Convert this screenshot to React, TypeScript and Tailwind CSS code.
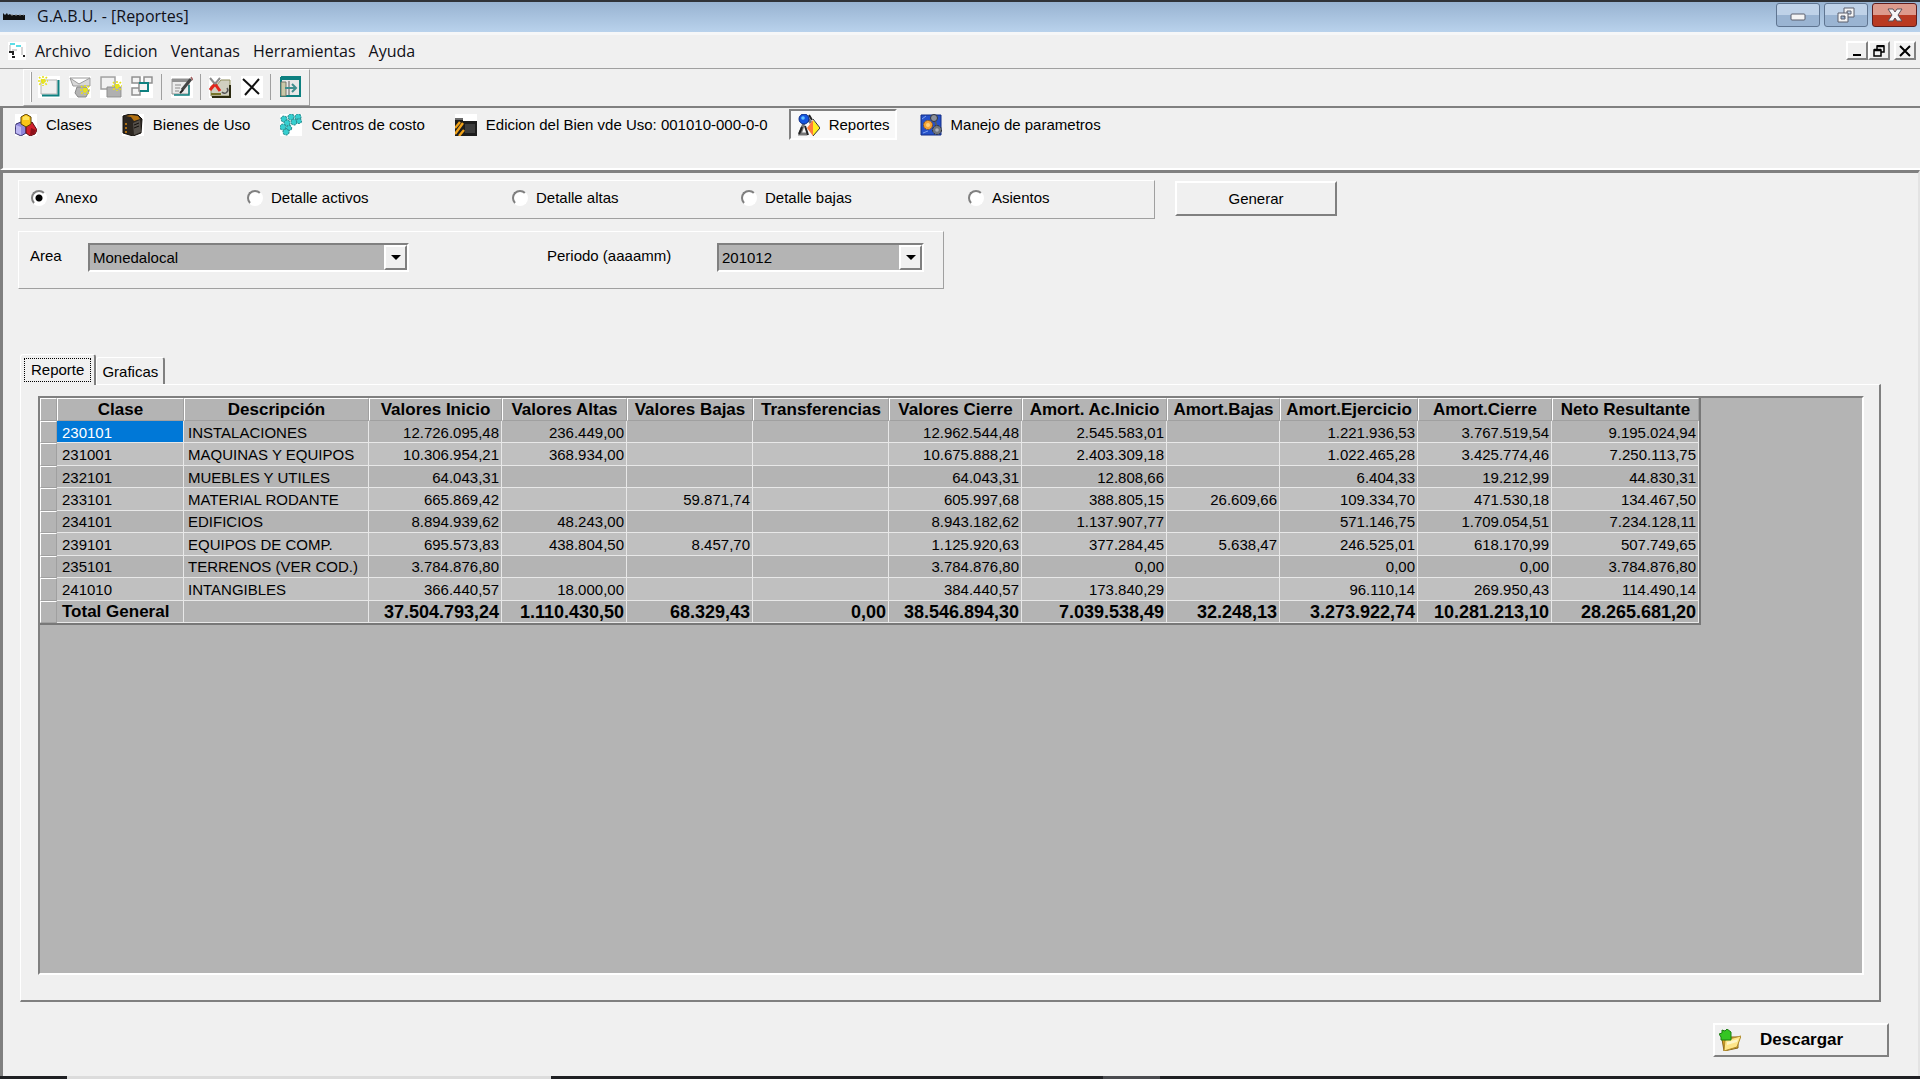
import React, { ReactNode, useState } from 'react';

interface Row {
  clase: string;
  descripcion: string;
  valores: string[];
}

const columns = [
  { title: 'Clase', width: 'w-[127px]' },
  { title: 'Descripción', width: 'w-[185px]' },
  { title: 'Valores Inicio', width: 'w-[133px]' },
  { title: 'Valores Altas', width: 'w-[125px]' },
  { title: 'Valores Bajas', width: 'w-[126px]' },
  { title: 'Transferencias', width: 'w-[136px]' },
  { title: 'Valores Cierre', width: 'w-[133px]' },
  { title: 'Amort. Ac.Inicio', width: 'w-[145px]' },
  { title: 'Amort.Bajas', width: 'w-[113px]' },
  { title: 'Amort.Ejercicio', width: 'w-[138px]' },
  { title: 'Amort.Cierre', width: 'w-[134px]' },
  { title: 'Neto Resultante', width: 'w-[147px]' },
];

const rows: Row[] = [
  { clase: '230101', descripcion: 'INSTALACIONES', valores: ['12.726.095,48', '236.449,00', '', '', '12.962.544,48', '2.545.583,01', '', '1.221.936,53', '3.767.519,54', '9.195.024,94'] },
  { clase: '231001', descripcion: 'MAQUINAS Y EQUIPOS', valores: ['10.306.954,21', '368.934,00', '', '', '10.675.888,21', '2.403.309,18', '', '1.022.465,28', '3.425.774,46', '7.250.113,75'] },
  { clase: '232101', descripcion: 'MUEBLES Y UTILES', valores: ['64.043,31', '', '', '', '64.043,31', '12.808,66', '', '6.404,33', '19.212,99', '44.830,31'] },
  { clase: '233101', descripcion: 'MATERIAL RODANTE', valores: ['665.869,42', '', '59.871,74', '', '605.997,68', '388.805,15', '26.609,66', '109.334,70', '471.530,18', '134.467,50'] },
  { clase: '234101', descripcion: 'EDIFICIOS', valores: ['8.894.939,62', '48.243,00', '', '', '8.943.182,62', '1.137.907,77', '', '571.146,75', '1.709.054,51', '7.234.128,11'] },
  { clase: '239101', descripcion: 'EQUIPOS DE COMP.', valores: ['695.573,83', '438.804,50', '8.457,70', '', '1.125.920,63', '377.284,45', '5.638,47', '246.525,01', '618.170,99', '507.749,65'] },
  { clase: '235101', descripcion: 'TERRENOS (VER COD.)', valores: ['3.784.876,80', '', '', '', '3.784.876,80', '0,00', '', '0,00', '0,00', '3.784.876,80'] },
  { clase: '241010', descripcion: 'INTANGIBLES', valores: ['366.440,57', '18.000,00', '', '', '384.440,57', '173.840,29', '', '96.110,14', '269.950,43', '114.490,14'] },
];

const totales = ['37.504.793,24', '1.110.430,50', '68.329,43', '0,00', '38.546.894,30', '7.039.538,49', '32.248,13', '3.273.922,74', '10.281.213,10', '28.265.681,20'];

const reportTypes = ['Anexo', 'Detalle activos', 'Detalle altas', 'Detalle bajas', 'Asientos'];

const Icon = ({ children, size = 'size-[22px]' }: { children: ReactNode; size?: string }) => (
  <svg viewBox="0 0 22 22" className={`${size} shrink-0`} aria-hidden="true">
    {children}
  </svg>
);

const Spark = ({ x, y }: { x: number; y: number }) => (
  <g stroke="#e6e21e" strokeWidth="1.6" strokeDasharray="2 1">
    <path d={`M${x - 5} ${y}h10M${x} ${y - 5}v10M${x - 4} ${y - 4}l8 8M${x + 4} ${y - 4}l-8 8`} />
  </g>
);

/* Toolbar icons */

const NewIcon = () => (
  <Icon>
    <path fill="#fff" d="M0 0h22v22H0z" />
    <path fill="#f0f0f0" stroke="#b4b4b4" d="M3 4h16v14H3z" />
    <path fill="none" stroke="#0d8080" strokeWidth="2" d="M20.500 4v15.500H4" />
    <Spark x={5} y={5} />
  </Icon>
);

const OpenIcon = () => (
  <Icon>
    <path fill="#fff" d="M0 0h22v22H0z" />
    <path fill="#d8d8d8" stroke="#9a9a9a" d="M1 2h20v8H4zM1 2l9 6 11-6" />
    <path fill="#b4b4b4" stroke="#8a8a8a" d="M8 11h9l3 4-3 6H9l-3-4z" />
    <Spark x={16} y={14} />
  </Icon>
);

const CopyIcon = () => (
  <Icon>
    <path fill="#fff" d="M0 0h22v22H0z" />
    <path fill="#f2f2f2" stroke="#a0a0a0" strokeWidth="1.500" d="M1 1h14v12H1z" />
    <path fill="#b0b0b0" stroke="#909090" d="M7 11h14v10H7z" />
    <Spark x={17} y={10} />
  </Icon>
);

const CascadeIcon = () => (
  <Icon>
    <path fill="#fff" d="M0 0h22v22H0z" />
    <path fill="#f4f4f4" stroke="#8f8f8f" strokeWidth="1.500" d="M1 1h8v6H1zM13 1h8v6h-8zM1 12h8v7H1z" />
    <path fill="#f4f4f4" stroke="#8f8f8f" strokeWidth="1.500" d="M8 7h9v8H8z" />
    <path fill="none" stroke="#0d8080" strokeWidth="2" d="M8 7h9v8H9" />
  </Icon>
);

const EditIcon = () => (
  <Icon>
    <path fill="#fff" d="M0 0h22v22H0z" />
    <path fill="#ececec" stroke="#909090" d="M1 3h17v15H1z" />
    <path fill="#909090" d="M1 3h17v3H1z" />
    <path stroke="#aaa" strokeWidth="1.500" d="M4 9h6M4 12h5M4 15h4" />
    <path fill="none" stroke="#0d8080" strokeWidth="1.500" d="M18 9v10H3" />
    <path stroke="#444" strokeWidth="3" d="M11 14l9-11" />
    <path stroke="#a06060" strokeWidth="1.500" d="M20 1l2 3" />
    <path stroke="#222" strokeWidth="2" d="M9 17l3-3" />
  </Icon>
);

const DeleteIcon = () => (
  <Icon>
    <path fill="#fff" d="M0 0h22v22H0z" />
    <path fill="#d0cfc0" stroke="#8f8d5c" d="M2 10h5l5-6h9v16H2z" />
    <path fill="none" stroke="#77752a" strokeWidth="2" d="M2 18h10" />
    <path fill="none" stroke="#2b2a10" strokeWidth="2" d="M3 21h18V9" />
    <path fill="none" stroke="#555" strokeWidth="1.500" d="M18 12a3 3 0 0 1-5 4" />
    <path fill="none" stroke="#e3241c" strokeWidth="3" d="M1 14l5-6 5 7" />
    <path stroke="#8a8a8a" strokeWidth="2" d="M1 2l5 6M11 2L6 8" />
  </Icon>
);

const CrossIcon = () => (
  <Icon>
    <path fill="#fff" d="M0 0h22v22H0z" />
    <path fill="none" stroke="#111" strokeWidth="2" d="M2 3l16 15M18 3L4 19" />
  </Icon>
);

const ExitIcon = () => (
  <Icon>
    <path fill="#e8e8e8" stroke="#0d8080" strokeWidth="2" d="M1 2h19v18H1z" />
    <path fill="#0d8080" d="M1 0h20v4H1z" />
    <path fill="#c9c9a8" stroke="#77776a" d="M1 6h5v14H1z" />
    <path stroke="#888" strokeWidth="1.500" d="M9 5v14" />
    <path fill="none" stroke="#3f8f8f" strokeWidth="2" d="M5 12h11M12 8l4 4-4 4" />
  </Icon>
);

/* Window list icons */

const ClasesIcon = () => (
  <Icon>
    <path fill="#fff" d="M0 0h22v22H0z" />
    <path fill="#8f86dc" stroke="#3b3570" d="M1 10l5-2 5 4v7l-5 3-6-3z" />
    <path fill="#bcb6f2" d="M1 11l5 2v8l-5-2z" />
    <path fill="#d3202c" stroke="#5c0d12" d="M11 12l6-4 5 8-2 4-5 2-4-3z" />
    <path fill="#8e1119" d="M16 14l5 2-2 4-4 1z" />
    <path fill="#fbc417" stroke="#5d4307" d="M6 3l5-3 5 3v7l-5 3-5-3z" />
    <path fill="#ffe45a" d="M8 3l3-1 3 1v3H8z" />
  </Icon>
);

const BienesIcon = () => (
  <Icon>
    <path fill="#fff" d="M0 0h22v22H0z" />
    <path fill="#2c2620" stroke="#15110d" d="M1 2l7-2 8 1 4 4-1 14-8 3-10-3z" />
    <path fill="#b5720f" d="M4 2l5-1 7 1 2 3-6 2-3-4z" />
    <path fill="#55504a" d="M11 9l7-3 1 12-7 3z" />
    <path fill="none" stroke="#d8860f" strokeWidth="1.500" strokeDasharray="2 2" d="M4 9v11" />
    <path stroke="#15110d" d="M12 11l5-2M12 14l5-2" />
  </Icon>
);

const CentrosIcon = () => (
  <Icon>
    <path fill="#fff" d="M0 0h22v22H0z" />
    <g fill="#35cfd0" stroke="#2f8f92" strokeWidth="1.200" strokeDasharray="2 1">
      <circle cx="4" cy="5" r="3" />
      <circle cx="11" cy="3" r="3" />
      <circle cx="18" cy="3" r="3" />
      <circle cx="7" cy="9" r="3" />
      <circle cx="14" cy="8" r="3" />
      <circle cx="19" cy="7" r="2.500" />
      <circle cx="3" cy="13" r="3" />
      <circle cx="9" cy="14" r="2.600" />
      <circle cx="6" cy="18" r="3" />
    </g>
  </Icon>
);

const EdicionIcon = () => (
  <Icon>
    <path fill="#fff" d="M0 0h22v8H0z" />
    <path fill="#6b6b6b" d="M0 4h8v4H0z" />
    <path fill="#1c1c1c" d="M0 6h8v1h14v15H0z" />
    <path fill="#3c3c3c" d="M10 10h10v9H10z" />
    <path stroke="#f0a21a" strokeWidth="2.400" d="M0 14l5-6M0 20l8-11M4 22l5-6" />
  </Icon>
);

const ReportesIcon = () => (
  <Icon>
    <path fill="none" stroke="#777" strokeWidth="3" d="M6 9L2 20h7M9 4l4 5" />
    <path stroke="#222" strokeWidth="2" d="M11 1l3 5M1 20l3-7M7 12l3 9" />
    <circle cx="6" cy="5" r="5" fill="#1556e0" stroke="#0a2a84" />
    <circle cx="5" cy="4" r="1.800" fill="#63c4ff" />
    <path fill="#ff7a3c" d="M15 6v16l-6-8z" />
    <path fill="#ffee1f" d="M15 6l7 8-7 8z" />
    <path fill="none" stroke="#333" d="M15 5l7 9-7 8" />
  </Icon>
);

const ParametrosIcon = () => (
  <Icon>
    <path fill="#2450c8" stroke="#122c84" d="M1 1h20v20H1z" />
    <path stroke="#7ea0ee" d="M2 5l4-3M3 19l5-2" />
    <path stroke="#555a63" strokeWidth="2" d="M15 7l2 6" />
    <circle cx="14" cy="4" r="3.500" fill="#8a8f99" stroke="#33373f" />
    <circle cx="8" cy="11" r="4.500" fill="#f4a234" stroke="#8a5410" strokeDasharray="2 1" />
    <circle cx="8" cy="11" r="2" fill="#ffd07a" />
    <circle cx="17" cy="16" r="4.500" fill="#6f747c" stroke="#2b2e34" strokeDasharray="2 1" />
    <circle cx="17" cy="16" r="1.800" fill="#aab0ba" />
  </Icon>
);

const FolderIcon = () => (
  <Icon>
    <path fill="#d8a224" stroke="#86651a" d="M3 10h7l2-2h7v11l-14 3z" />
    <path fill="#ffe68a" stroke="#b08a28" d="M6 11l16-4-4 11-13 4z" />
    <path fill="#fff6c8" d="M8 13l11-3-1 3-10 3z" />
    <path fill="#35c523" stroke="#1c7d12" d="M0 5l3-1V1l3 1 2-2 4 3v8H2V8z" />
  </Icon>
);

/* Raised and sunken edges used all over the form */

const raised = 'border-2 border-t-white border-l-white border-r-[#808080] border-b-[#808080]';
const sunken = 'border-2 border-t-[#808080] border-l-[#808080] border-r-white border-b-white';
const groupBox = 'border border-t-white border-l-white border-r-[#a0a0a0] border-b-[#a0a0a0]';

const TitleBar = () => (
  <header className="flex h-[35px] items-center border-t-2 border-b-[3px] border-t-[#303338] border-b-[#f6f7f8] bg-linear-to-b from-[#98b3d1] to-[#b9d2ec] pr-[3px] pl-[3px]">
    <svg viewBox="0 0 22 8" className="mr-3 h-2 w-[22px]" aria-hidden="true">
      <path fill="#111" d="M0 0l2 2 2-2 1 2 2-1 1 1h14v5H0z" />
      <path stroke="#888" strokeDasharray="2 2" d="M8 2h13" />
    </svg>
    <h1 className="pb-[2px] font-['Open_Sans','Noto_Sans',sans-serif] text-[16px] leading-[22px] text-[#101018]">G.A.B.U. - [Reportes]</h1>
    <div className="ml-auto flex h-full items-start gap-1 pt-px">
      <button aria-label="Minimizar" className="flex h-6 w-11 items-center justify-center rounded-[3px] border border-[#5f7591] bg-linear-to-b from-[#bfd2e8] from-50% to-[#9ab4d2] to-50%">
        <svg viewBox="0 0 16 8" className="mt-1 h-2 w-4"><rect x="1" y="1" width="14" height="6" rx="1" fill="#f4f4f4" stroke="#5a5f6c" /></svg>
      </button>
      <button aria-label="Restaurar" className="flex h-6 w-11 items-center justify-center rounded-[3px] border border-[#5f7591] bg-linear-to-b from-[#bfd2e8] from-50% to-[#9ab4d2] to-50%">
        <svg viewBox="0 0 18 16" className="h-4 w-[18px]">
          <path fill="#f4f4f4" fillRule="evenodd" stroke="#5a5f6c" d="M7 1h10v9H7zM10 4v3h4V4z" />
          <path fill="#f4f4f4" fillRule="evenodd" stroke="#5a5f6c" d="M1 6h10v9H1zM4 9v3h4V9z" />
        </svg>
      </button>
      <button aria-label="Cerrar" className="flex h-6 w-[45px] items-center justify-center rounded-[3px] border border-[#5e1e1e] bg-linear-to-b from-[#dd9a8c] from-50% to-[#b93a22] to-50%">
        <svg viewBox="0 0 16 14" className="h-[14px] w-4">
          <path fill="#f6f6f6" stroke="#5a5058" d="M1 1h5l2 3 2-3h5l-4 6 4 6h-5l-2-3-2 3H1l4-6z" />
        </svg>
      </button>
    </div>
  </header>
);

const MenuBar = () => (
  <nav className="flex h-[34px] items-center border-b border-b-[#a0a0a0] pr-1 pb-[2px] pl-2">
    <svg viewBox="0 0 18 18" className="mr-[9px] size-[18px]" aria-hidden="true">
      <path fill="#fff" d="M0 0h18v18H0z" />
      <path fill="#5cdde6" d="M2 1h5v2H2zM8 3h5v2H8z" />
      <path stroke="#aaa" d="M2 3v6M14 5v8M4 8h5" />
      <path fill="none" stroke="#222" strokeWidth="2" d="M1 10h4v3M4 15h3M15 14h2" />
    </svg>
    <div className="flex gap-[13px] font-['Open_Sans','Noto_Sans',sans-serif] text-[16px] leading-[22px] text-[#101018]">
      <button>Archivo</button>
      <button>Edicion</button>
      <button>Ventanas</button>
      <button>Herramientas</button>
      <button>Ayuda</button>
    </div>
    <div className="ml-auto flex">
      <button aria-label="Minimizar ventana" className={`flex h-[19px] w-[22px] items-center justify-center ${raised}`}>
        <svg viewBox="0 0 14 12" className="h-3 w-[14px]"><path fill="#000" d="M3 9h8v2H3z" /></svg>
      </button>
      <button aria-label="Restaurar ventana" className={`mr-1 flex h-[19px] w-[22px] items-center justify-center ${raised}`}>
        <svg viewBox="0 0 14 12" className="h-3 w-[14px]">
          <path fill="none" stroke="#000" strokeWidth="1.500" d="M5 4V1h7v6H9M2 5h7v6H2z" />
          <path stroke="#000" strokeWidth="2.500" d="M5 1h7M2 5h7" />
        </svg>
      </button>
      <button aria-label="Cerrar ventana" className={`flex h-[19px] w-[22px] items-center justify-center ${raised}`}>
        <svg viewBox="0 0 14 12" className="h-3 w-[14px]"><path stroke="#000" strokeWidth="2" d="M2 1l10 10M12 1L2 11" /></svg>
      </button>
    </div>
  </nav>
);

const Separator = ({ className }: { className: string }) => <div className={`h-[26px] w-px bg-[#a0a0a0] ${className}`}></div>;

const Toolbar = () => (
  <div className="flex h-[37px] pl-[23px]">
    <div className={`flex items-center pr-[7px] pb-px pl-[6px] ${groupBox}`}>
      <div className="mr-[6px] h-[30px] w-[2px] border-r border-l border-r-[#a0a0a0] border-l-white"></div>
      <div className="flex gap-[9px]">
        <button aria-label="Nuevo"><NewIcon /></button>
        <button aria-label="Abrir"><OpenIcon /></button>
        <button aria-label="Copiar"><CopyIcon /></button>
        <button aria-label="Cascada"><CascadeIcon /></button>
      </div>
      <Separator className="mr-[9px] ml-2" />
      <button aria-label="Editar"><EditIcon /></button>
      <Separator className="mr-2 ml-[7px]" />
      <div className="flex gap-[10px]">
        <button aria-label="Borrar"><DeleteIcon /></button>
        <button aria-label="Cancelar"><CrossIcon /></button>
      </div>
      <Separator className="mr-[9px] ml-[7px]" />
      <button aria-label="Salir"><ExitIcon /></button>
    </div>
  </div>
);

interface WindowButtonProps {
  icon: ReactNode;
  label: string;
  active?: boolean;
}

const WindowButton = ({ icon, label, active = false }: WindowButtonProps) => (
  <button
    aria-pressed={active}
    className={`flex h-[31px] items-center gap-[9px] pr-[5px] pl-[7px] ${active ? `bg-[#f8f8f8] ${sunken}` : 'border-2 border-transparent'}`}
  >
    {icon}
    {label}
  </button>
);

const WindowList = () => (
  <div className="flex h-16 items-start gap-[14px] border-t-2 border-b-2 border-l-[3px] border-t-[#808080] border-b-white border-l-[#808080] pt-px pl-[3px]">
    <WindowButton icon={<ClasesIcon />} label="Clases" />
    <WindowButton icon={<BienesIcon />} label="Bienes de Uso" />
    <WindowButton icon={<CentrosIcon />} label="Centros de costo" />
    <WindowButton icon={<EdicionIcon />} label="Edicion del Bien vde Uso: 001010-000-0-0" />
    <WindowButton icon={<ReportesIcon />} label="Reportes" active />
    <WindowButton icon={<ParametrosIcon />} label="Manejo de parametros" />
  </div>
);

interface ComboProps {
  id: string;
  value: string;
  className: string;
}

const Combo = ({ id, value, className }: ComboProps) => (
  <div className={`relative h-[29px] bg-[#b4b4b4] ${sunken} ${className}`}>
    <select id={id} defaultValue={value} className="h-full w-full appearance-none pl-[3px] leading-5 outline-none">
      <option>{value}</option>
    </select>
    <span className={`pointer-events-none absolute inset-y-0 right-0 flex w-[23px] items-center justify-center bg-[#f0f0f0] ${raised}`}>
      <svg viewBox="0 0 10 5" className="h-[5px] w-[10px]"><path fill="#000" d="M0 0h10L5 5z" /></svg>
    </span>
  </div>
);

const Grid = () => (
  <table className="h-[227px] w-[1659px] table-fixed border-separate border-spacing-0 border-r-2 border-b-2 border-r-[#787878] border-b-[#787878] leading-[18px]">
    <thead>
      <tr className="h-[23px] text-[17px]">
        <th className="w-[17px] border border-t-white border-r-[#a0a0a0] border-b-[#a0a0a0] border-l-white p-0"></th>
        {columns.map((column) => (
          <th key={column.title} className={`border border-t-white border-r-[#a0a0a0] border-b-[#a0a0a0] border-l-white p-0 pt-px whitespace-nowrap ${column.width}`}>
            {column.title}
          </th>
        ))}
      </tr>
    </thead>
    <tbody>
      {rows.map((row, index) => (
        <tr key={row.clase} className={index % 2 ? 'bg-[#c0c0c0]' : 'bg-[#b4b4b4]'}>
          <td className="border border-t-white border-r-[#a0a0a0] border-b-[#a0a0a0] border-l-white bg-[#b4b4b4] p-0"></td>
          <td className={`border-r border-b border-[#e8e8e8] p-0 pt-[2px] pl-[5px] ${index === 0 ? 'bg-[#0078d7] text-white' : ''}`}>{row.clase}</td>
          <td className="border-r border-b border-[#e8e8e8] p-0 pt-[2px] pl-1 whitespace-nowrap">{row.descripcion}</td>
          {row.valores.map((valor, i) => (
            <td key={i} className="border-r border-b border-[#e8e8e8] p-0 pt-[2px] pr-[2px] text-right">{valor}</td>
          ))}
        </tr>
      ))}
      <tr className="bg-[#b4b4b4] text-[17px] font-bold">
        <td className="border border-t-white border-r-[#a0a0a0] border-b-[#a0a0a0] border-l-white p-0"></td>
        <td className="border-r border-b border-[#e8e8e8] p-0 pt-[2px] pl-[5px] whitespace-nowrap">Total General</td>
        <td className="border-r border-b border-[#e8e8e8] p-0"></td>
        {totales.map((total, i) => (
          <td key={i} className="border-r border-b border-[#e8e8e8] p-0 pt-[2px] pr-[2px] text-right text-[18px]">{total}</td>
        ))}
      </tr>
    </tbody>
  </table>
);

export default function App() {
  const [tipo, setTipo] = useState('Anexo');

  return (
    <div className="flex min-h-screen flex-col bg-[#f0f0f0] font-['Liberation_Sans',Arial,sans-serif] text-[15px] leading-5 text-black">
      <TitleBar />
      <MenuBar />
      <Toolbar />
      <WindowList />

      <main className="flex flex-1 flex-col border-t-[3px] border-r-2 border-l-[3px] border-t-[#808080] border-r-[#e3e3e3] border-l-[#808080] pt-[7px] pr-[29px] pb-[19px] pl-[15px]">
        <div className="flex items-start">
          <fieldset className={`grid h-[39px] w-[1137px] grid-cols-[216px_265px_229px_227px_1fr] items-center pb-[3px] pl-3 ${groupBox}`}>
            {reportTypes.map((type) => (
              <label key={type} className="flex items-center gap-2">
                <input
                  type="radio"
                  name="tipo"
                  checked={tipo === type}
                  onChange={() => setTipo(type)}
                  className={`size-4 appearance-none rounded-full bg-white checked:bg-[radial-gradient(#000_3px,#fff_4px)] ${sunken}`}
                />
                {type}
              </label>
            ))}
          </fieldset>
          <button className={`mt-px ml-5 h-[35px] w-[162px] ${raised}`}>Generar</button>
        </div>

        <div className={`mt-3 flex h-[58px] w-[926px] items-start pt-[11px] pl-[11px] ${groupBox}`}>
          <label htmlFor="area" className="w-[58px] pt-[3px]">Area</label>
          <Combo id="area" value="Monedalocal" className="w-[321px]" />
          <label htmlFor="periodo" className="ml-[138px] w-[170px] pt-[3px]">Periodo (aaaamm)</label>
          <Combo id="periodo" value="201012" className="w-[207px]" />
        </div>

        <div role="tablist" className="mt-[65px] ml-[2px] flex items-end">
          <button role="tab" aria-selected="true" className="z-10 -mb-px h-[31px] rounded-t-[3px] border border-r-2 border-b-0 border-t-white border-r-[#808080] border-l-white bg-[#f0f0f0] p-[3px] pb-1">
            <span className="block border border-dotted border-black px-[6px] leading-[22px]">Reporte</span>
          </button>
          <button role="tab" aria-selected="false" className="h-[27px] rounded-t-[3px] border border-r-2 border-b-0 border-t-white border-r-[#808080] border-l-white px-[5px] pt-px">
            Graficas
          </button>
        </div>
        <section className="mr-2 ml-[2px] flex flex-1 flex-col border border-r-2 border-b-2 border-t-white border-r-[#808080] border-b-[#808080] border-l-white pt-[11px] pr-[15px] pb-[25px] pl-[17px]">
          <div className={`flex-1 bg-[#b4b4b4] ${sunken}`}>
            <Grid />
          </div>
        </section>

        <button className={`mt-[21px] flex h-[34px] w-[176px] items-center self-end pl-1 text-[17px] font-bold ${raised}`}>
          <FolderIcon />
          <span className="ml-[19px]">Descargar</span>
        </button>
      </main>

      {/* Top edge of the system taskbar */}
      <footer className="flex h-[3px] bg-[#1f2023]">
        <div className="ml-[67px] w-[484px] bg-[#dcdcdc]"></div>
        <div className="ml-[552px] w-[57px] bg-[#4a4b4f]"></div>
      </footer>
    </div>
  );
}
